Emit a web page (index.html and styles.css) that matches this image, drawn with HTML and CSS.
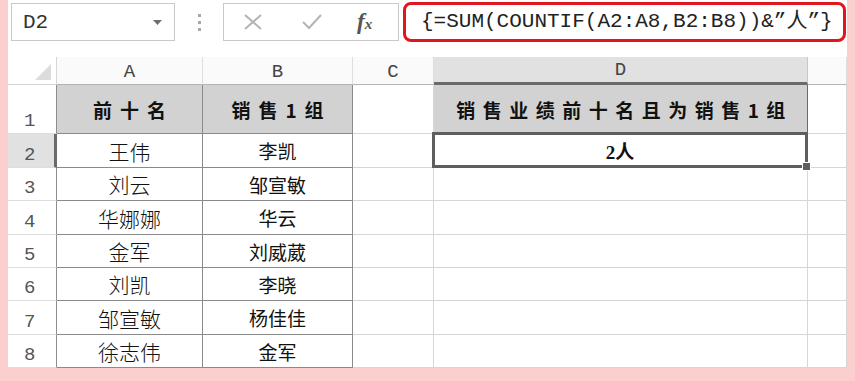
FILE: index.html
```html
<!DOCTYPE html>
<html lang="zh-CN">
<head>
  <meta charset="UTF-8">
  <title>销售业绩统计</title>
  <link rel="stylesheet" href="styles.css">
</head>
<body>
  <div class="sheet">

    <!-- name box, buttons and formula -->
    <div class="toolbar">
      <div class="name-box">
        <span>D2</span>
        <svg class="drop" width="9" height="5" viewBox="0 0 9 5"><path d="M0 0h9L4.5 5z" fill="#6f6f6f"/></svg>
      </div>
      <div class="grip"><i></i><i></i><i></i></div>
      <div class="fx-buttons">
        <svg width="20" height="18" viewBox="0 0 20 18"><path d="M2 2L18 16M18 2L2 16" stroke="#b4b4b4" stroke-width="2" fill="none"/></svg>
        <svg width="22" height="18" viewBox="0 0 22 18"><path d="M2 9L8 15L20 2" stroke="#b4b4b4" stroke-width="2" fill="none"/></svg>
        <span class="fx">f<sub>x</sub></span>
      </div>
      <div class="formula">{=SUM(COUNTIF(A2:A8,B2:B8))&amp;”人”}</div>
    </div>

    <!-- worksheet -->
    <div class="grid">
      <div class="corner"><i></i></div>
      <div class="col-head">A</div>
      <div class="col-head">B</div>
      <div class="col-head">C</div>
      <div class="col-head active">D</div>
      <div class="col-head"></div>

      <div class="row-head">1</div>
      <div class="cell boxed title">前十名</div>
      <div class="cell boxed title">销售1组</div>
      <div class="cell"></div>
      <div class="cell title wide">销售业绩前十名且为销售1组</div>
      <div class="cell"></div>

      <div class="row-head active">2</div>
      <div class="cell boxed name">王伟</div>
      <div class="cell boxed group">李凯</div>
      <div class="cell"></div>
      <div class="cell result">2人<i class="handle"></i></div>
      <div class="cell"></div>

      <div class="row-head">3</div>
      <div class="cell boxed name">刘云</div>
      <div class="cell boxed group">邹宣敏</div>
      <div class="cell"></div><div class="cell"></div><div class="cell"></div>

      <div class="row-head">4</div>
      <div class="cell boxed name">华娜娜</div>
      <div class="cell boxed group">华云</div>
      <div class="cell"></div><div class="cell"></div><div class="cell"></div>

      <div class="row-head">5</div>
      <div class="cell boxed name">金军</div>
      <div class="cell boxed group">刘威葳</div>
      <div class="cell"></div><div class="cell"></div><div class="cell"></div>

      <div class="row-head">6</div>
      <div class="cell boxed name">刘凯</div>
      <div class="cell boxed group">李晓</div>
      <div class="cell"></div><div class="cell"></div><div class="cell"></div>

      <div class="row-head">7</div>
      <div class="cell boxed name">邹宣敏</div>
      <div class="cell boxed group">杨佳佳</div>
      <div class="cell"></div><div class="cell"></div><div class="cell"></div>

      <div class="row-head">8</div>
      <div class="cell boxed name">徐志伟</div>
      <div class="cell boxed group">金军</div>
      <div class="cell"></div><div class="cell"></div><div class="cell"></div>
    </div>

  </div>
</body>
</html>
```

FILE: styles.css
```css
body {
  margin: 0;
  background-color: #fccfcf;
  font-family: "Noto Sans CJK SC", sans-serif;
  color: #111;
}

.sheet {
  margin-left: 8px;
  width: 839px;
  height: 368px;
  background-color: #fff;
}

/* ---- top bar ---- */

.toolbar {
  display: flex;
  align-items: flex-start;
  height: 57px;
  padding-top: 2px;
  box-sizing: border-box;
}

.name-box {
  display: flex;
  align-items: center;
  justify-content: space-between;
  margin: 1px 0 0 3px;
  width: 164px;
  height: 38px;
  padding: 0 12px 0 11px;
  box-sizing: border-box;
  border: 1px solid #c8c8c8;
  font-family: "Liberation Mono", monospace;
  font-size: 21px;
  color: #333;
}

.grip {
  display: flex;
  flex-direction: column;
  gap: 4px;
  margin: 12px 22px 0 23px;
}

.grip i {
  width: 3px;
  height: 3px;
  background-color: #a8a8a8;
}

.fx-buttons {
  display: flex;
  align-items: center;
  margin-top: 1px;
  width: 176px;
  height: 38px;
  box-sizing: border-box;
  border: 1px solid #c8c8c8;
  padding-left: 19px;
}

.fx-buttons svg {
  margin-right: 38px;
}

.fx-buttons svg + svg {
  margin-right: 34px;
}

.fx {
  font-family: "Liberation Serif", serif;
  font-style: italic;
  font-weight: bold;
  font-size: 23px;
  color: #555;
}

.fx sub {
  font-size: 15px;
  vertical-align: 0;
}

.formula {
  margin-left: 4px;
  width: 443px;
  height: 40px;
  box-sizing: border-box;
  border: 3px solid #e2141e;
  border-radius: 8px;
  padding-left: 15px;
  font-family: "Liberation Mono", "Noto Sans CJK SC", monospace;
  font-size: 21px;
  line-height: 34px;
  color: #222;
  white-space: nowrap;
}

/* ---- worksheet ---- */

.grid {
  display: grid;
  grid-template-columns: 49px 146px 150px 81px 374px 39px;
  grid-template-rows: 28px 49px 34px 33px 34px 33px 33px 34px 33px;
}

.grid > div {
  box-sizing: border-box;
  border-right: 1px solid #d6d6d6;
  border-bottom: 1px solid #d6d6d6;
  display: flex;
  align-items: center;
  justify-content: center;
}

.corner {
  position: relative;
  background-color: #fff;
}

.corner i {
  position: absolute;
  right: 5px;
  bottom: 4px;
  width: 0;
  height: 0;
  border-left: 16px solid transparent;
  border-bottom: 16px solid #dcdcdc;
}

.grid > .col-head {
  align-items: flex-end;
  padding-bottom: 1px;
  background-color: #fafafa;
  border-bottom-color: #b4b4b4;
  border-right-color: #dedede;
  font-family: "Liberation Mono", monospace;
  font-size: 19px;
  color: #444;
}

.grid > .col-head.active {
  background-color: #e1e1e1;
  border-bottom: 3px solid #6a6a6a;
  border-right-color: #c8c8c8;
}

.grid > .row-head {
  justify-content: flex-start;
  align-items: flex-end;
  padding: 0 0 1px 16px;
  border-right-color: #8e8e8e;
  border-bottom-color: #dedede;
  font-family: "Liberation Mono", monospace;
  font-size: 19px;
  color: #555;
}

.grid > .row-head.active {
  background-color: #e1e1e1;
  border-right: 3px solid #6a6a6a;
}

.grid > .boxed {
  border-right-color: #8a8a8a;
  border-bottom-color: #8a8a8a;
}

.title {
  background-color: #d2d2d2;
  font-weight: bold;
  font-size: 19px;
  letter-spacing: 8px;
  padding-left: 8px;
}

.grid > .wide {
  letter-spacing: 7.5px;
  border-right-color: #6a6a6a;
  border-bottom-color: #6a6a6a;
}

.name {
  font-size: 21px;
  font-weight: 300;
}

.group {
  font-size: 19px;
  font-weight: 400;
}

.grid > .result {
  position: relative;
  border: 3px solid #5e5e5e;
  margin: -2px 0 0 -2px;
  font-weight: bold;
  font-size: 19px;
  font-family: "Liberation Serif", "Noto Sans CJK SC", serif;
}

.handle {
  position: absolute;
  right: -6px;
  bottom: -6px;
  width: 7px;
  height: 7px;
  background-color: #5e5e5e;
  border: 1px solid #fff;
}
```
